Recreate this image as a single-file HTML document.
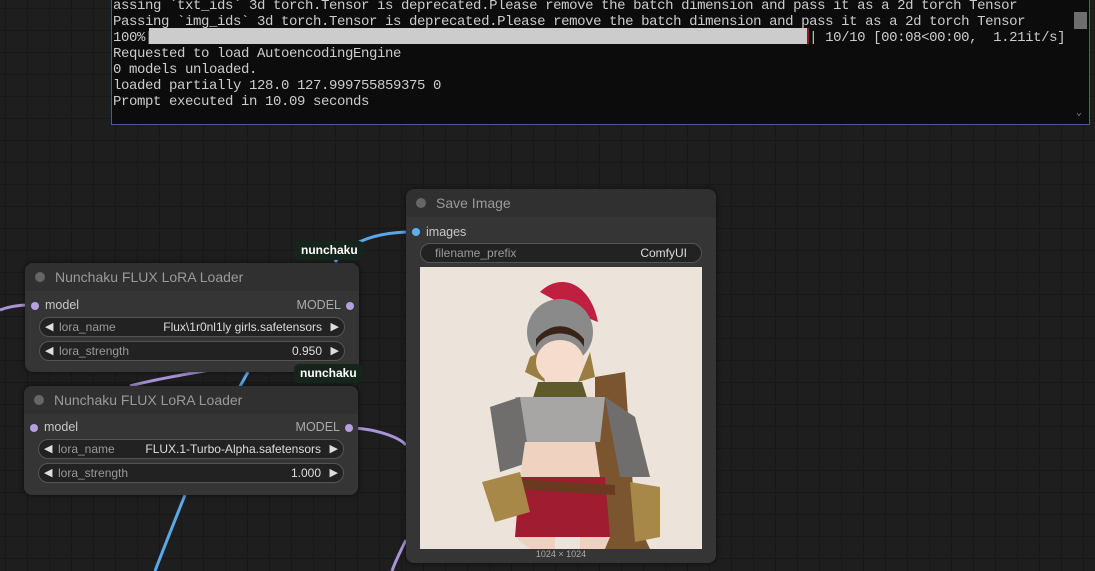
<!DOCTYPE html>
<html><head><style>
*{margin:0;padding:0;box-sizing:border-box}
body{width:1095px;height:571px;overflow:hidden;background:#1e1e1e;position:relative;font-family:"Liberation Sans",sans-serif;
background-image:linear-gradient(#181818 1px,transparent 1px),linear-gradient(90deg,#181818 1px,transparent 1px);background-size:22px 22px;background-position:5px 8px}
.term{position:absolute;left:111px;top:-1px;width:979px;height:126px;background:#0c0c0c;border:1px solid #4b5a94;overflow:hidden;font-family:"Liberation Mono",monospace;font-size:14px;letter-spacing:-0.4px;color:#cccccc;line-height:16px}
.term pre{position:absolute;left:1px;top:-2px;font:inherit;white-space:pre}
.bar{position:absolute;left:37px;top:28px;width:660px;height:16px;background:#cccccc;border-right:2px solid #8b1a1a}
.sb{position:absolute;right:0;top:0;width:17px;height:124px;background:#0c0c0c}
.sb i{position:absolute;left:2px;top:12px;width:13px;height:17px;background:#6e6e6e}
.node{position:absolute;background:#353535;border-radius:8px;box-shadow:0 0 6px rgba(0,0,0,.6)}
.title{height:28px;background:#303030;border-radius:8px 8px 0 0;color:#9a9a9a;font-size:14px;line-height:28px;padding-left:30px;position:relative}
.title:before{content:"";position:absolute;left:10px;top:9px;width:10px;height:10px;border-radius:50%;background:#666}
.row{position:absolute;font-size:12.5px;color:#c8c8c8}
.dot{position:absolute;width:8px;height:8px;border-radius:50%}
.w{position:absolute;height:20px;background:#222;border:1px solid #555;border-radius:10px;font-size:12px;color:#999;line-height:18px}
.w .v{position:absolute;right:22px;color:#ddd}
.w .l{position:absolute;left:5px;color:#ddd;font-size:11px}
.w .r{position:absolute;right:5px;color:#ddd;font-size:11px}
.tag{position:absolute;background:#15251b;color:#fff;font-size:12px;font-weight:bold;padding:0 6px;height:19px;line-height:19px;border-radius:5px}
</style></head><body>
<svg style="position:absolute;left:0;top:0" width="1095" height="571">
<g fill="none" stroke-width="3">
<path d="M335 262 C350 240 380 232 412 232" stroke="#5aa8e8"/>
<path d="M248 372 L238 390" stroke="#5aa8e8"/>
<path d="M185 495 C175 520 165 545 155 571" stroke="#5aa8e8"/>
<path d="M0 310 C10 306 20 305 30 305" stroke="#a994d8"/>
<path d="M130 386 C160 378 200 372 238 365" stroke="#a994d8"/>
<path d="M355 428 C380 430 400 438 406 445" stroke="#a994d8"/>
<path d="M406 540 C400 552 395 562 392 571" stroke="#a994d8"/>
</g></svg>
<div class="term"><pre>assing `txt_ids` 3d torch.Tensor is deprecated.Please remove the batch dimension and pass it as a 2d torch Tensor
Passing `img_ids` 3d torch.Tensor is deprecated.Please remove the batch dimension and pass it as a 2d torch Tensor
100%|                                                                                  | 10/10 [00:08&lt;00:00,  1.21it/s]
Requested to load AutoencodingEngine
0 models unloaded.
loaded partially 128.0 127.999755859375 0
Prompt executed in 10.09 seconds</pre><div class="bar"></div><div class="sb"><i></i><span style="position:absolute;left:4px;bottom:2px;color:#888;font-size:10px">⌄</span></div></div>

<div class="node" style="left:25px;top:263px;width:334px;height:109px">
<div class="title">Nunchaku FLUX LoRA Loader</div>
<div class="dot" style="left:6px;top:39px;background:#b4a0e0"></div>
<div class="row" style="left:20px;top:35px">model</div>
<div class="row" style="right:18px;top:35px;color:#aaa">MODEL</div>
<div class="dot" style="right:5px;top:39px;background:#b4a0e0"></div>
<div class="w" style="left:14px;top:54px;width:306px"><span class="l">◀</span><span style="position:absolute;left:19px">lora_name</span><span class="v">Flux\1r0nl1ly girls.safetensors</span><span class="r">▶</span></div>
<div class="w" style="left:14px;top:78px;width:306px"><span class="l">◀</span><span style="position:absolute;left:19px">lora_strength</span><span class="v">0.950</span><span class="r">▶</span></div>
</div>
<div class="node" style="left:24px;top:386px;width:334px;height:109px">
<div class="title">Nunchaku FLUX LoRA Loader</div>
<div class="dot" style="left:6px;top:38px;background:#b4a0e0"></div>
<div class="row" style="left:20px;top:34px">model</div>
<div class="row" style="right:18px;top:34px;color:#aaa">MODEL</div>
<div class="dot" style="right:5px;top:38px;background:#b4a0e0"></div>
<div class="w" style="left:14px;top:53px;width:306px"><span class="l">◀</span><span style="position:absolute;left:19px">lora_name</span><span class="v">FLUX.1-Turbo-Alpha.safetensors</span><span class="r">▶</span></div>
<div class="w" style="left:14px;top:77px;width:306px"><span class="l">◀</span><span style="position:absolute;left:19px">lora_strength</span><span class="v">1.000</span><span class="r">▶</span></div>
</div>
<div class="tag" style="left:295px;top:241px">nunchaku</div>
<div class="tag" style="left:294px;top:364px">nunchaku</div>

<div class="node" style="left:406px;top:189px;width:310px;height:374px">
<div class="title" style="font-size:14px">Save Image</div>
<div class="dot" style="left:6px;top:39px;background:#5ab0f0"></div>
<div class="row" style="left:20px;top:36px">images</div>
<div class="w" style="left:14px;top:54px;width:282px"><span style="position:absolute;left:14px">filename_prefix</span><span class="v" style="right:14px">ComfyUI</span></div>
<svg style="position:absolute;left:14px;top:78px" width="282" height="282">
<rect width="282" height="282" fill="#ece4da"/>
<path d="M175 110 L205 105 L215 250 L230 282 L175 282Z" fill="#7a5530"/>
<path d="M120 25 C140 5 170 15 178 55 L165 50 Z" fill="#c02040"/>
<circle cx="140" cy="65" r="33" fill="#8a8a8a"/>
<path d="M110 90 L105 105 L125 115 L120 85Z M170 85 L175 110 L158 115Z" fill="#9a7d40"/>
<ellipse cx="140" cy="95" rx="24" ry="22" fill="#f5dccc"/>
<path d="M116 80 C125 62 155 62 164 80 L164 72 C150 55 130 55 116 72Z" fill="#3a2418"/>
<path d="M118 115 L162 115 L170 140 L110 140Z" fill="#5e5a2c"/>
<path d="M95 130 L185 130 L180 175 L100 175Z" fill="#a8a6a4"/>
<path d="M70 140 L100 130 L110 195 L80 205Z M185 130 L215 150 L230 210 L200 210Z" fill="#706e6c"/>
<path d="M105 175 L175 175 L180 210 L100 210Z" fill="#f0d2c0"/>
<path d="M100 210 L185 210 L190 270 L95 270Z" fill="#a01c30"/>
<path d="M95 212 L195 218 L195 228 L95 222Z" fill="#6a3a20"/>
<path d="M62 215 L100 205 L110 245 L75 255Z M210 215 L240 220 L240 270 L215 275Z" fill="#a88848"/>
<path d="M95 270 L110 282 L135 282 L135 270Z M160 270 L160 282 L185 282 L190 270Z" fill="#f0d0c0"/>
</svg>
<div style="position:absolute;left:0;width:310px;top:360px;text-align:center;font-size:9px;color:#aaa">1024 × 1024</div>
</div>
</body></html>
